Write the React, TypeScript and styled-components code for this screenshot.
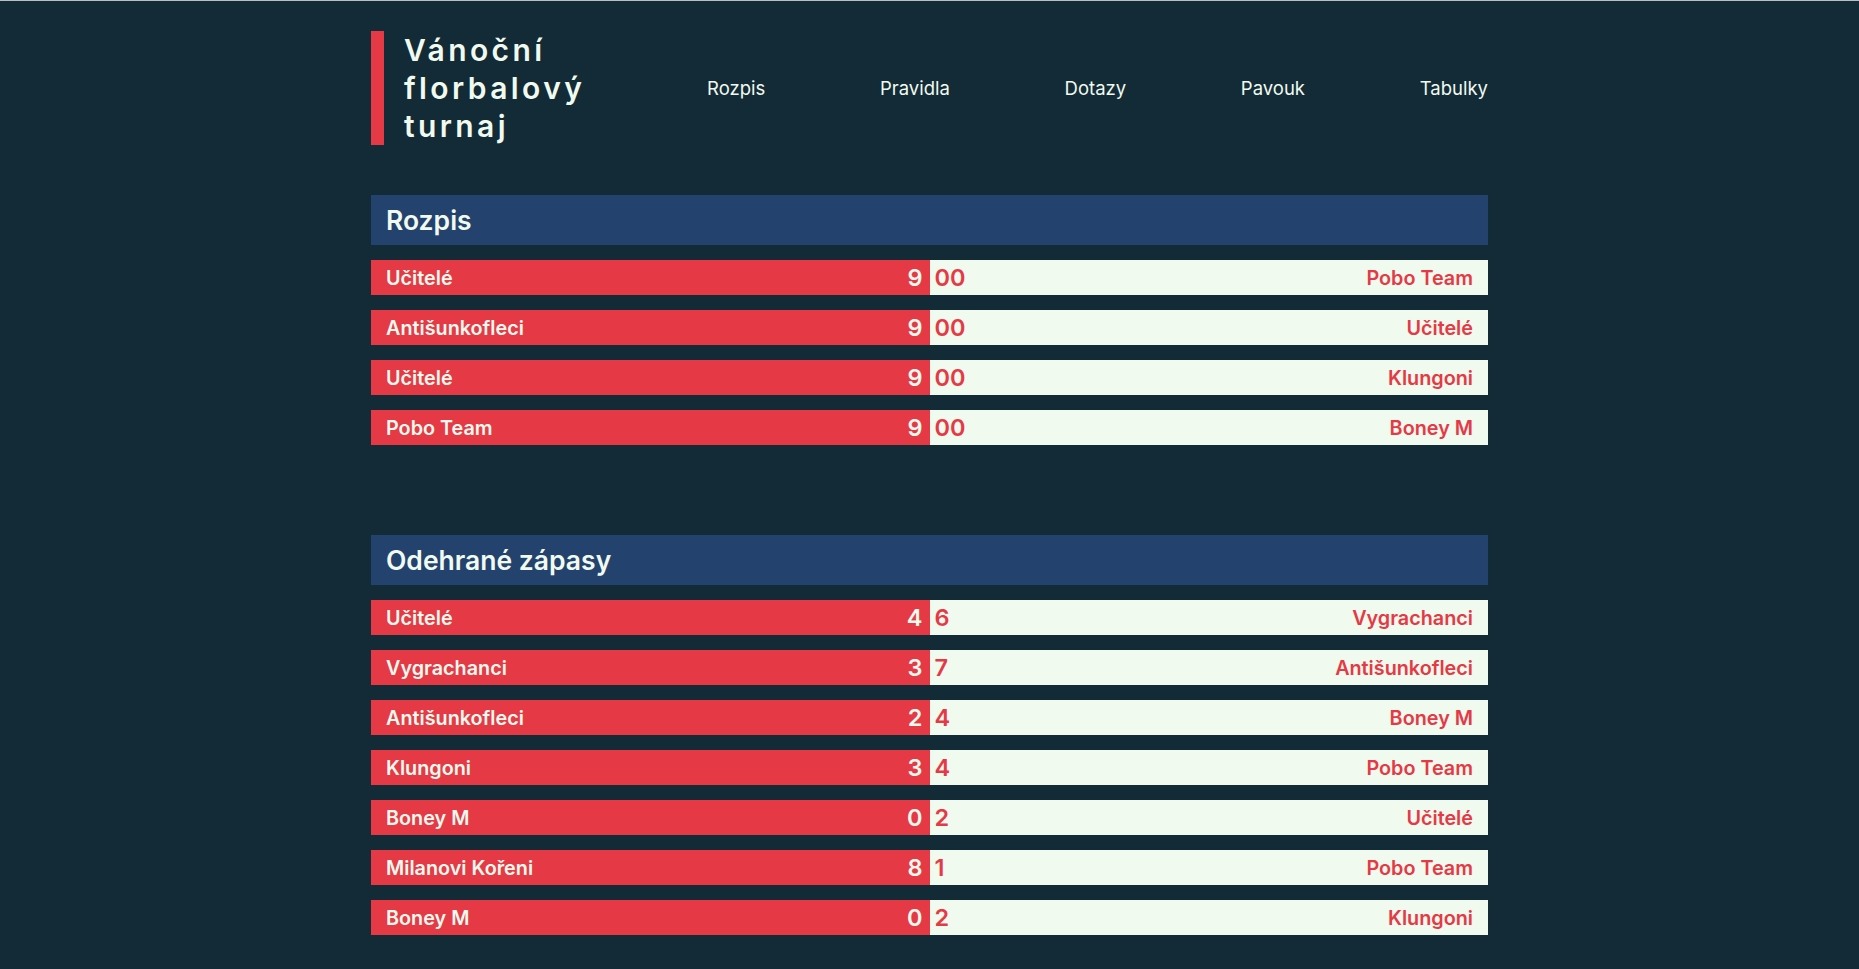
import React from "react";
import styled, { createGlobalStyle } from "styled-components";

const C = {
  bg: "#122b37",
  navy: "#23426e",
  red: "#e63946",
  light: "#f1faee",
};

const Global = createGlobalStyle`
  html, body {
    margin: 0;
    padding: 0;
    background: ${C.bg};
    font-family: "Inter", "Roboto", sans-serif;
    color: ${C.light};
  }
  body {
    border-top: 1px solid #b8bec2;
  }
`;

const Page = styled.div`
  max-width: 1117px;
  margin: 0 auto;
  padding: 30px 0 40px;
`;

const Header = styled.header`
  display: flex;
  align-items: center;
  justify-content: space-between;
  margin-bottom: 50px;
`;

const Title = styled.h1`
  margin: 0;
  border-left: 13px solid ${C.red};
  padding-left: 20px;
  font-size: 30px;
  line-height: 38px;
  font-weight: 600;
  letter-spacing: 3.4px;
  color: ${C.light};
  width: 220px;
`;

const Nav = styled.nav`
  display: flex;
  justify-content: space-between;
  width: 781px;
`;

const NavLink = styled.a`
  font-size: 18.5px;
  font-weight: 400;
  color: ${C.light};
  text-decoration: none;
  cursor: pointer;
`;

const Section = styled.section`
  display: flex;
  flex-direction: column;
  gap: 15px;
  margin-bottom: 90px;
`;

const SectionTitle = styled.h2`
  margin: 0;
  height: 50px;
  display: flex;
  align-items: center;
  padding: 0 15px;
  background: ${C.navy};
  font-size: 26.5px;
  font-weight: 600;
  color: ${C.light};
`;

const Row = styled.div`
  display: grid;
  grid-template-columns: 1fr 1fr;
  height: 35px;
`;

const Half = styled.div<{ $home?: boolean }>`
  display: flex;
  align-items: center;
  justify-content: space-between;
  background: ${(p) => (p.$home ? C.red : C.light)};
  color: ${(p) => (p.$home ? C.light : C.red)};
  padding: ${(p) => (p.$home ? "0 7px 0 15px" : "0 15px 0 5px")};
`;

const Team = styled.span`
  font-size: 19.8px;
  font-weight: 600;
`;

const Score = styled.span`
  font-size: 23.5px;
  font-weight: 600;
`;

type Match = [string, string, string, string];

const schedule: Match[] = [
  ["Učitelé", "9", "00", "Pobo Team"],
  ["Antišunkofleci", "9", "00", "Učitelé"],
  ["Učitelé", "9", "00", "Klungoni"],
  ["Pobo Team", "9", "00", "Boney M"],
];

const played: Match[] = [
  ["Učitelé", "4", "6", "Vygrachanci"],
  ["Vygrachanci", "3", "7", "Antišunkofleci"],
  ["Antišunkofleci", "2", "4", "Boney M"],
  ["Klungoni", "3", "4", "Pobo Team"],
  ["Boney M", "0", "2", "Učitelé"],
  ["Milanovi Kořeni", "8", "1", "Pobo Team"],
  ["Boney M", "0", "2", "Klungoni"],
];

const MatchRow = ({ m }: { m: Match }) => (
  <Row>
    <Half $home>
      <Team>{m[0]}</Team>
      <Score>{m[1]}</Score>
    </Half>
    <Half>
      <Score>{m[2]}</Score>
      <Team>{m[3]}</Team>
    </Half>
  </Row>
);

export default function App() {
  return (
    <>
      <Global />
      <Page>
        <Header>
          <Title>
            Vánoční
            <br />
            florbalový
            <br />
            turnaj
          </Title>
          <Nav>
            {["Rozpis", "Pravidla", "Dotazy", "Pavouk", "Tabulky"].map((n) => (
              <NavLink key={n}>{n}</NavLink>
            ))}
          </Nav>
        </Header>
        <Section>
          <SectionTitle>Rozpis</SectionTitle>
          {schedule.map((m, i) => (
            <MatchRow key={i} m={m} />
          ))}
        </Section>
        <Section>
          <SectionTitle>Odehrané zápasy</SectionTitle>
          {played.map((m, i) => (
            <MatchRow key={i} m={m} />
          ))}
        </Section>
      </Page>
    </>
  );
}
